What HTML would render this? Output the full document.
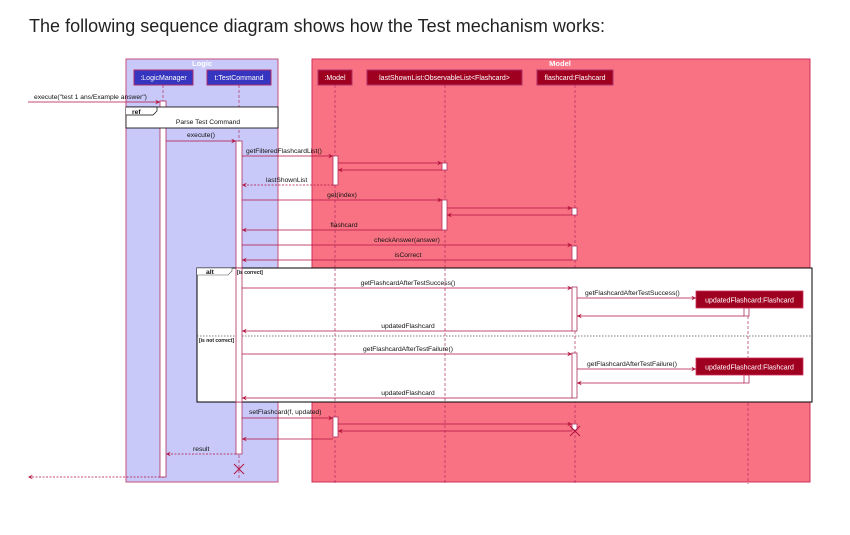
<!DOCTYPE html>
<html><head><meta charset="utf-8"><style>
html,body{margin:0;padding:0;background:#fff;width:850px;height:535px;overflow:hidden}
svg{display:block}
text{font-family:"Liberation Sans",sans-serif}
.s{font-size:6.7px;fill:#111}
.w{font-size:7px;fill:#fff}
</style></head><body>
<svg width="850" height="535" viewBox="0 0 850 535" xmlns="http://www.w3.org/2000/svg">
<defs>
<marker id="a" viewBox="0 0 8 8" refX="8" refY="4" markerWidth="6" markerHeight="6" orient="auto"><path d="M0,0 L8,4 L0,8 L3,4 z" fill="#b0103a"/></marker>
</defs>
<text x="29" y="32" font-size="18" fill="#222" textLength="576">The following sequence diagram shows how the Test mechanism works:</text>

<rect x="126" y="59" width="152" height="423" fill="#c9c9f9" stroke="#c8507a" stroke-width="1"/>
<rect x="312" y="59" width="498" height="423" fill="#f97283" stroke="#d0305a" stroke-width="1"/>
<text x="202" y="66" font-size="7.5" fill="#fff" font-weight="bold" text-anchor="middle">Logic</text>
<text x="560" y="66" font-size="7.5" fill="#fff" font-weight="bold" text-anchor="middle">Model</text>

<g stroke="#b03060" stroke-width="0.7" stroke-dasharray="3,2">
<line x1="163" y1="85" x2="163" y2="480"/>
<line x1="239" y1="85" x2="239" y2="480"/>
<line x1="335" y1="85" x2="335" y2="484"/>
<line x1="445" y1="85" x2="445" y2="484"/>
<line x1="575" y1="85" x2="575" y2="484"/>
<line x1="748" y1="308" x2="748" y2="484"/>
</g>

<g stroke="#b0306a" stroke-width="1">
<rect x="134" y="70" width="59" height="15" fill="#3535c0"/>
<rect x="207" y="70" width="64" height="15" fill="#3535c0"/>
<rect x="318" y="70" width="34" height="15" fill="#a00020"/>
<rect x="367" y="70" width="155" height="15" fill="#a00020"/>
<rect x="537" y="70" width="76" height="15" fill="#a00020"/>
</g>
<text class="w" x="163.5" y="80" text-anchor="middle">:LogicManager</text>
<text class="w" x="239" y="80" text-anchor="middle">t:TestCommand</text>
<text class="w" x="335" y="80" text-anchor="middle">:Model</text>
<text class="w" x="444.5" y="80" text-anchor="middle">lastShownList:ObservableList&lt;Flashcard&gt;</text>
<text class="w" x="575" y="80" text-anchor="middle">flashcard:Flashcard</text>

<g fill="#fff" stroke="#b03060" stroke-width="0.8">
<rect x="160" y="101" width="6" height="376"/>
<rect x="236" y="141" width="6" height="313"/>
<rect x="333" y="156" width="5" height="29"/>
<rect x="333" y="417" width="5" height="20"/>
<rect x="442" y="163" width="5" height="7"/>
<rect x="442" y="200" width="5" height="30"/>
<rect x="572" y="208" width="5" height="7"/>
<rect x="572" y="246" width="5" height="14"/>
<rect x="572" y="424" width="5" height="6"/>
</g>

<rect x="126" y="107" width="152" height="21" fill="#fff" stroke="#000" stroke-width="0.8"/>
<path d="M126,107 h31 v4 l-4,4 h-27" fill="#fff" stroke="#000" stroke-width="0.7"/>
<text class="s" x="132" y="114" font-weight="bold">ref</text>
<text class="s" x="208" y="124" text-anchor="middle">Parse Test Command</text>

<rect x="197" y="268" width="615" height="134" fill="#fff" stroke="#000" stroke-width="1"/>
<line x1="197" y1="336" x2="812" y2="336" stroke="#555" stroke-width="0.7" stroke-dasharray="1.5,1.5"/>
<path d="M197,268 h35 v3 l-4,4 h-31" fill="#fff" stroke="#555" stroke-width="0.6"/>
<line x1="748" y1="316" x2="748" y2="375" stroke="#b03060" stroke-width="0.7" stroke-dasharray="3,2"/>
<line x1="575" y1="331" x2="575" y2="353" stroke="#b03060" stroke-width="0.7" stroke-dasharray="3,2"/>
<line x1="335" y1="268" x2="335" y2="402" stroke="#b03060" stroke-width="0.7" stroke-dasharray="3,2"/>
<line x1="445" y1="268" x2="445" y2="402" stroke="#b03060" stroke-width="0.7" stroke-dasharray="3,2"/>
<g fill="#fff" stroke="#b03060" stroke-width="0.8">
<rect x="236" y="268" width="6" height="134"/>
<rect x="572" y="287" width="5" height="44"/>
<rect x="572" y="353" width="5" height="45"/>
<rect x="744" y="308" width="5" height="8"/>
<rect x="744" y="375" width="5" height="8"/>
</g>
<text class="s" x="206" y="274" font-weight="bold">alt</text>
<text x="237" y="274" font-size="5" font-weight="bold" fill="#111">[is correct]</text>
<text x="199" y="342" font-size="5" font-weight="bold" fill="#111">[is not correct]</text>
<rect x="696" y="291" width="107" height="17" fill="#a00020" stroke="#d0305a" stroke-width="0.8"/>
<rect x="696" y="358" width="107" height="17" fill="#a00020" stroke="#d0305a" stroke-width="0.8"/>
<text class="w" x="749.5" y="302.5" text-anchor="middle">updatedFlashcard:Flashcard</text>
<text class="w" x="749.5" y="369.5" text-anchor="middle">updatedFlashcard:Flashcard</text>

<g stroke="#b01040" stroke-width="0.8" fill="none" marker-end="url(#a)">
<line x1="28" y1="102" x2="160" y2="102"/>
<line x1="166" y1="141" x2="236" y2="141"/>
<line x1="242" y1="156" x2="333" y2="156"/>
<line x1="338" y1="163" x2="442" y2="163"/>
<line x1="442" y1="170" x2="338" y2="170"/>
<line x1="333" y1="185" x2="242" y2="185" stroke-dasharray="2,1.5"/>
<line x1="242" y1="200" x2="442" y2="200"/>
<line x1="447" y1="208" x2="572" y2="208"/>
<line x1="572" y1="215" x2="447" y2="215"/>
<line x1="442" y1="230" x2="242" y2="230"/>
<line x1="242" y1="245" x2="572" y2="245"/>
<line x1="572" y1="260" x2="242" y2="260"/>
<line x1="242" y1="288" x2="572" y2="288"/>
<line x1="577" y1="298" x2="696" y2="298"/>
<line x1="744" y1="316" x2="577" y2="316"/>
<line x1="572" y1="331" x2="242" y2="331"/>
<line x1="242" y1="354" x2="572" y2="354"/>
<line x1="577" y1="369" x2="696" y2="369"/>
<line x1="744" y1="383" x2="577" y2="383"/>
<line x1="572" y1="398" x2="242" y2="398"/>
<line x1="242" y1="418" x2="333" y2="418"/>
<line x1="338" y1="424" x2="572" y2="424"/>
<line x1="572" y1="431" x2="338" y2="431"/>
<line x1="333" y1="439" x2="242" y2="439"/>
<line x1="236" y1="454" x2="166" y2="454" stroke-dasharray="2,1.5"/>
<line x1="160" y1="477" x2="28" y2="477" stroke-dasharray="2,1.5"/>
</g>
<text class="s" x="34" y="99">execute("test 1 ans/Example answer")</text>
<text class="s" x="201" y="137" text-anchor="middle">execute()</text>
<text class="s" x="246" y="153">getFilteredFlashcardList()</text>
<text class="s" x="266" y="182">lastShownList</text>
<text class="s" x="342" y="197" text-anchor="middle">get(index)</text>
<text class="s" x="344" y="227" text-anchor="middle">flashcard</text>
<text class="s" x="407" y="242" text-anchor="middle">checkAnswer(answer)</text>
<text class="s" x="408" y="257" text-anchor="middle">isCorrect</text>
<text class="s" x="408" y="285" text-anchor="middle">getFlashcardAfterTestSuccess()</text>
<text class="s" x="585" y="295">getFlashcardAfterTestSuccess()</text>
<text class="s" x="408" y="328" text-anchor="middle">updatedFlashcard</text>
<text class="s" x="408" y="351" text-anchor="middle">getFlashcardAfterTestFailure()</text>
<text class="s" x="587" y="366">getFlashcardAfterTestFailure()</text>
<text class="s" x="408" y="395" text-anchor="middle">updatedFlashcard</text>
<text class="s" x="249" y="414">setFlashcard(f, updated)</text>
<text class="s" x="193" y="451">result</text>
<g stroke="#b01040" stroke-width="0.9">
<path d="M570,426 l10,10 M580,426 l-10,10"/>
<path d="M234,464 l10,10 M244,464 l-10,10"/>
</g>
</svg>
</body></html>
